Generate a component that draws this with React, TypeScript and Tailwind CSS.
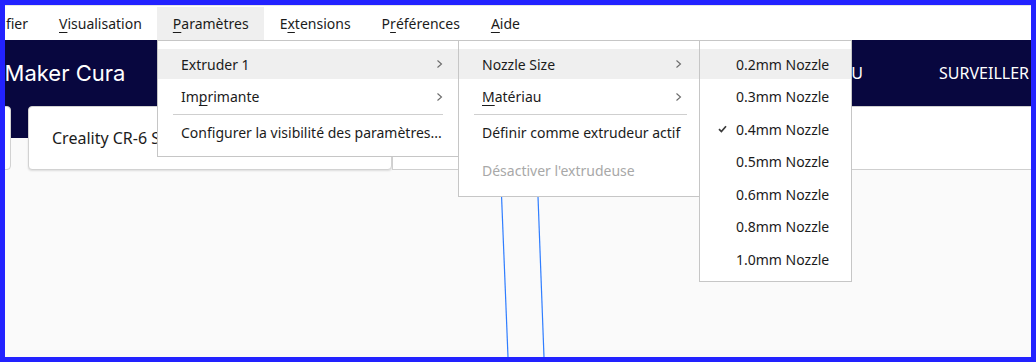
const menubar = [
  { label: "Modifier", key: "" },
  { label: "Visualisation", key: "V" },
  { label: "Paramètres", key: "P", active: true },
  { label: "Extensions", key: "x" },
  { label: "Préférences", key: "r" },
  { label: "Aide", key: "A" },
];

const nozzles = ["0.2mm Nozzle", "0.3mm Nozzle", "0.4mm Nozzle", "0.5mm Nozzle", "0.6mm Nozzle", "0.8mm Nozzle", "1.0mm Nozzle"];

// underline the mnemonic letter, like Qt does
function Mnemonic({ text, k }: { text: string; k: string }) {
  const i = k ? text.indexOf(k) : -1;
  if (i < 0) return <>{text}</>;
  return (
    <>
      {text.slice(0, i)}
      <span className="underline decoration-1 underline-offset-[3px]">{text[i]}</span>
      {text.slice(i + 1)}
    </>
  );
}

function Chevron() {
  return (
    <svg width="7" height="10" viewBox="0 0 7 10" className="shrink-0">
      <path d="M1.5 1.5 5.5 5l-4 3.5" fill="none" stroke="#6a6a6a" strokeWidth="1.1" />
    </svg>
  );
}

function Item({ label, k = "", hi = false, sub = false, pl = "pl-[23px]", pr = "pr-[15px]", dim = false }: {
  label: string; k?: string; hi?: boolean; sub?: boolean; pl?: string; pr?: string; dim?: boolean;
}) {
  return (
    <div className="h-[32.5px]">
      <div className={`h-[30px] flex items-center justify-between ${pl} ${pr} ${hi ? "bg-[#efefef]" : ""} ${dim ? "text-[#a8a8a8]" : ""}`}>
        <span className="whitespace-nowrap"><Mnemonic text={label} k={k} /></span>
        {sub && <Chevron />}
      </div>
    </div>
  );
}

export default function App() {
  return (
    <div className="w-[1036px] h-[362px] bg-[#2222ff] p-[5px]">
      <div className="relative w-full h-full overflow-hidden bg-[#fafafa] font-['Noto_Sans',sans-serif] text-[14px] text-[#1b1b1b]">
        {/* menu bar */}
        <div className="h-[35px] bg-white border-t border-[#e6e6e6] pt-px flex">
          <div className="flex ml-[-48px]">
            {menubar.map((m) => (
              <div key={m.label} className={`h-[33px] px-[15.5px] flex items-center whitespace-nowrap ${m.active ? "bg-[#efefef]" : ""}`}>
                <Mnemonic text={m.label} k={m.key} />
              </div>
            ))}
          </div>
        </div>

        {/* header */}
        <div className="h-[66px] bg-[#08073f] flex items-center text-white">
          <div className="ml-[-35px] font-['Inter',sans-serif] text-[22px] whitespace-nowrap">UltiMaker Cura</div>
          <nav className="ml-auto mr-[-36px] flex text-[16px]">
            {["PRÉPARER", "APERÇU", "SURVEILLER"].map((t) => (
              <div key={t} className="px-[38px] whitespace-nowrap">{t}</div>
            ))}
          </nav>
        </div>

        {/* printer selector row */}
        <div className="h-[64px] flex bg-[linear-gradient(to_bottom,#08073f_32px,transparent_32px)]">
          <div className="ml-[-35px] w-[41px] shrink-0 bg-white border border-[#d2d2d2] rounded-[4px]" />
          <div className="ml-[17px] w-[364px] shrink-0 bg-white border border-[#d2d2d2] rounded-[4px] shadow-[0_1px_2px_rgba(0,0,0,0.12)] flex items-center pl-[23px] text-[16px] whitespace-nowrap">
            Creality CR-6 SE
          </div>
          <div className="flex-1 bg-white border-l border-b border-t border-[#cfcfcf]" />
        </div>

        {/* build volume lines */}
        <svg className="absolute inset-0 pointer-events-none" width="1026" height="352">
          <line x1="495.5" y1="165" x2="503" y2="352" stroke="#2f7dff" strokeWidth="1.2" />
          <line x1="532" y1="165" x2="539" y2="352" stroke="#2f7dff" strokeWidth="1.2" />
        </svg>

        {/* Paramètres menu */}
        <div className="absolute left-[152px] top-[35px] w-[302px] bg-white border border-[#c6c6c6] pt-[8px] pb-[6.5px]">
          <Item label="Extruder 1" hi sub />
          <Item label="Imprimante" k="p" sub />
          <div className="h-[3px] mx-[15px] border-t border-[#cfcfcf]" />
          <Item label="Configurer la visibilité des paramètres..." />
        </div>

        {/* Extruder 1 submenu */}
        <div className="absolute left-[453px] top-[35px] w-[242px] bg-white border border-[#c6c6c6] pt-[8px] pb-[8.5px]">
          <Item label="Nozzle Size" hi sub pr="pr-[17px]" />
          <Item label="Matériau" k="M" sub pr="pr-[17px]" />
          <div className="h-[3px] ml-[15px] mr-[12px] border-t border-[#cfcfcf]" />
          <Item label="Définir comme extrudeur actif" />
          <div className="mt-[5.5px]">
            <Item label="Désactiver l'extrudeuse" dim />
          </div>
        </div>

        {/* Nozzle Size submenu */}
        <div className="absolute left-[694px] top-[35px] w-[153px] bg-white border border-[#c6c6c6] pt-[8px] pb-[4.5px]">
          {nozzles.map((n, i) => (
            <div key={n} className="h-[32.5px]">
              <div className={`h-[30px] flex items-center ${i === 0 ? "bg-[#efefef]" : ""}`}>
                <div className="w-[36px] flex justify-end pr-[9px]">
                  {i === 2 && (
                    <svg width="9" height="8" viewBox="0 0 9 8">
                      <path d="M1 4.2 3.4 6.6 8 1.2" fill="none" stroke="#3a3a3a" strokeWidth="1.7" />
                    </svg>
                  )}
                </div>
                <span className="whitespace-nowrap">{n}</span>
              </div>
            </div>
          ))}
        </div>
      </div>
    </div>
  );
}
